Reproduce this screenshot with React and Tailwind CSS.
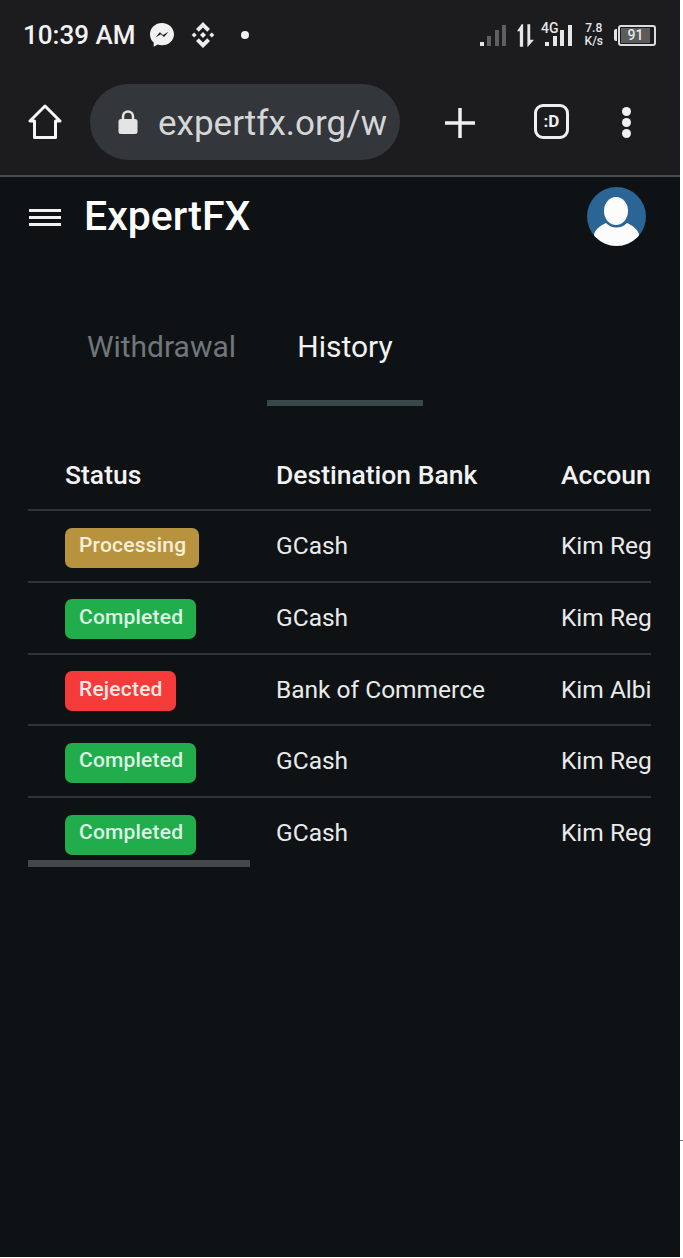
const rows = [
  { status: "Processing", tone: "bg-[#b8933f] text-[#f7efd9]", bank: "GCash", name: "Kim Regala" },
  { status: "Completed", tone: "bg-[#22ad4d] text-[#dcf7e4]", bank: "GCash", name: "Kim Regala" },
  { status: "Rejected", tone: "bg-[#f53b3a] text-[#fde7e6]", bank: "Bank of Commerce", name: "Kim Albino" },
  { status: "Completed", tone: "bg-[#22ad4d] text-[#dcf7e4]", bank: "GCash", name: "Kim Regala" },
  { status: "Completed", tone: "bg-[#22ad4d] text-[#dcf7e4]", bank: "GCash", name: "Kim Regala" },
];

const Messenger = () => (
  <svg width="26" height="26" viewBox="0 0 26 26">
    <path d="M13 1C6.200 1 1 5.900 1 12.300c0 3.400 1.400 6.300 3.700 8.300v4.200l4-2.200c1.300.4 2.800.6 4.300.6 6.800 0 12-4.900 12-11S19.800 1 13 1z" fill="#f2f2f2" />
    <path d="M6.500 15.500l4.300-5.300 3.200 2.800 5.500-3.200-4.400 5.300-3.200-2.800z" fill="#1c1c1e" />
  </svg>
);

const Binance = () => (
  <svg width="28" height="28" viewBox="0 0 28 28" fill="#ededed">
    <path d="M14 1l7 7-2.800 2.800L14 6.600l-4.200 4.200L7 8z" />
    <path d="M14 27l-7-7 2.800-2.800 4.200 4.200 4.200-4.200L21 20z" />
    <path d="M14 11l3 3-3 3-3-3z" />
    <path d="M5.200 11.500L7.700 14l-2.500 2.500L2.700 14z" />
    <path d="M22.800 11.500l2.500 2.500-2.500 2.500-2.500-2.500z" />
  </svg>
);

const Bars = ({ dim }) => (
  <div className="flex items-end gap-[3.500px]">
    <span className="h-[4px] w-[4px] bg-[#e6e6e6]" />
    <span className={`h-[10px] w-[4px] ${dim ? "bg-[#5f5f5f]" : "bg-[#e6e6e6]"}`} />
    <span className={`h-[16px] w-[4px] ${dim ? "bg-[#5f5f5f]" : "bg-[#e6e6e6]"}`} />
    <span className={`h-[21px] w-[4px] ${dim ? "bg-[#5f5f5f]" : "bg-[#e6e6e6]"}`} />
  </div>
);

const Arrows = () => (
  <svg width="17" height="23" viewBox="0 0 18 24" fill="#e6e6e6">
    <path d="M5 0L0 7.500h3V24h3.500V0z" />
    <path d="M11 0h3v16.500h4L11.500 24H11z" />
  </svg>
);

const StatusBar = () => (
  <div className="flex h-[70px] items-center pl-[23px] pr-[24px]">
    <span className="text-[26px] font-medium leading-none text-[#f2f2f2]">10:39 AM</span>
    <span className="ml-[14px] flex"><Messenger /></span>
    <span className="ml-[14px] flex"><Binance /></span>
    <span className="ml-[24px] h-[8px] w-[8px] rounded-full bg-[#f2f2f2]" />
    <div className="ml-auto flex items-center">
      <Bars dim />
      <span className="ml-[11px] flex"><Arrows /></span>
      <div className="relative ml-[11px]">
        <span className="absolute left-[-4px] top-[-4px] text-[14px] font-medium leading-none text-[#e6e6e6]">4G</span>
        <Bars />
      </div>
      <div className="ml-[13px] flex flex-col items-center text-[12px] font-medium leading-[13px] text-[#e6e6e6]">
        <span>7.8</span>
        <span>K/s</span>
      </div>
      <div className="ml-[11px] flex items-center">
        <span className="h-[12px] w-[3px] rounded-l-[2px] bg-[#e6e6e6]" />
        <div className="ml-[1px] flex h-[21px] w-[38px] items-center rounded-[3px] border-2 border-[#dcdcdc] p-[1px]">
          <div className="flex h-full w-[90%] items-center justify-center bg-[#5c5c5c] text-[14px] font-medium leading-none text-[#e6e6e6]">91</div>
        </div>
      </div>
    </div>
  </div>
);

const BrowserBar = () => (
  <div className="flex h-[105px] items-start pl-[28px]">
    <svg className="mt-[34px]" width="34" height="36" viewBox="0 0 34 36" fill="none" stroke="#f5f5f5" strokeWidth="3" strokeLinejoin="round">
      <path d="M17 2L2 17h4.500v16.500h21V17H32z" />
    </svg>
    <div className="ml-[28px] mt-[14px] flex h-[76px] w-[310px] items-center overflow-hidden rounded-full bg-[#33363a] pl-[28px]">
      <svg width="20" height="26" viewBox="0 0 20 26" className="shrink-0">
        <path d="M5 11V7.500a5 5 0 0 1 10 0V11" fill="none" stroke="#e4e4e4" strokeWidth="2.500" />
        <rect x="0.500" y="10" width="19" height="15" rx="2.500" fill="#e4e4e4" />
      </svg>
      <span className="ml-[20px] whitespace-nowrap pt-[3px] text-[35px] leading-none text-[#d5d6d7]">expertfx.org/w</span>
    </div>
    <svg className="ml-[44px] mt-[37px]" width="32" height="32" viewBox="0 0 32 32" stroke="#f0f0f0" strokeWidth="3.500">
      <path d="M16 1v30M1 16h30" />
    </svg>
    <div className="ml-[58px] mt-[34px] flex h-[35px] w-[35px] items-center justify-center rounded-[9px] border-[3px] border-[#f0f0f0] text-[17px] font-bold leading-none text-[#f0f0f0]">:D</div>
    <div className="ml-[53px] mt-[37px] flex flex-col gap-[2px]">
      <span className="h-[9px] w-[9px] rounded-full bg-[#f0f0f0]" />
      <span className="h-[9px] w-[9px] rounded-full bg-[#f0f0f0]" />
      <span className="h-[9px] w-[9px] rounded-full bg-[#f0f0f0]" />
    </div>
  </div>
);

const Avatar = () => (
  <svg width="59" height="59" viewBox="0 0 59 59">
    <clipPath id="avatar-clip"><circle cx="29.500" cy="29.500" r="29.500" /></clipPath>
    <g clipPath="url(#avatar-clip)">
      <rect width="59" height="59" fill="#2a6596" />
      <ellipse cx="29" cy="24" rx="12" ry="14" fill="#fcfcfc" />
      <path d="M7 47C9 41 15 38 19 36c3 3 6.500 4.500 10.500 4.500S37 39 40 36c4 2 10 5 12 11v13H7z" fill="#fcfcfc" />
    </g>
  </svg>
);

const AppHeader = () => (
  <div className="flex h-[68px] items-start pl-[29px] pr-[34px]">
    <div className="mt-[32px] flex w-[32px] flex-col gap-[4px]">
      <span className="h-[3px] bg-[#f2f2f2]" />
      <span className="h-[3px] bg-[#f2f2f2]" />
      <span className="h-[3px] bg-[#f2f2f2]" />
    </div>
    <span className="ml-[23px] mt-[15px] text-[41px] font-medium leading-[48px] text-white">ExpertFX</span>
    <div className="ml-auto mt-[10px] flex"><Avatar /></div>
  </div>
);

const Tabs = () => (
  <div className="mt-[68px] flex pl-[56px]">
    <div className="flex h-[93px] w-[211px] justify-center pt-[16px] text-[30px] leading-[36px] text-[#71767a]">Withdrawal</div>
    <div className="flex h-[93px] w-[156px] justify-center border-b-[6px] border-[#37474a] pt-[16px] text-[30px] leading-[36px] text-[#f2f2f2]">History</div>
  </div>
);

const HistoryTable = () => (
  <div className="ml-[28px] mt-[34px] w-[623px] overflow-hidden">
    <div className="flex h-[71px] items-center whitespace-nowrap border-b-2 border-[#2f3438] text-[26.500px] font-medium text-[#f2f2f2]">
      <div className="w-[248px] shrink-0 pl-[37px]">Status</div>
      <div className="w-[285px] shrink-0">Destination Bank</div>
      <div className="shrink-0">Account Name</div>
    </div>
    {rows.map((row, i) => (
      <div
        key={i}
        className={`flex items-start whitespace-nowrap pt-[14px] text-[24.500px] leading-[42px] text-[#e9eaea] ${i < rows.length - 1 ? "h-[71.750px] border-b-2 border-[#2f3438]" : "h-[62px]"}`}
      >
        <div className="flex w-[248px] shrink-0 pl-[37px] pt-[2.500px]">
          <span className={`flex h-[40px] items-center rounded-[7px] pb-[5px] pl-[14px] pr-[13px] text-[21px] font-medium tracking-[0.2px] ${row.tone}`}>{row.status}</span>
        </div>
        <div className="w-[285px] shrink-0">{row.bank}</div>
        <div className="shrink-0">{row.name}</div>
      </div>
    ))}
    <div className="h-[7px] w-[222px] bg-[#43484b]" />
  </div>
);

export default function App() {
  return (
    <div className="flex h-[1258px] w-[683px] overflow-hidden bg-white font-['Roboto',sans-serif]">
      <div className="flex h-[1257px] w-[680px] flex-col bg-[#0e1215]">
        <div className="border-b-2 border-[#4a4b4c] bg-[#1c1c1e]">
          <StatusBar />
          <BrowserBar />
        </div>
        <AppHeader />
        <Tabs />
        <HistoryTable />
      </div>
      <div className="flex-1">
        <div className="mt-[1140px] h-px bg-[#777]" />
      </div>
    </div>
  );
}
